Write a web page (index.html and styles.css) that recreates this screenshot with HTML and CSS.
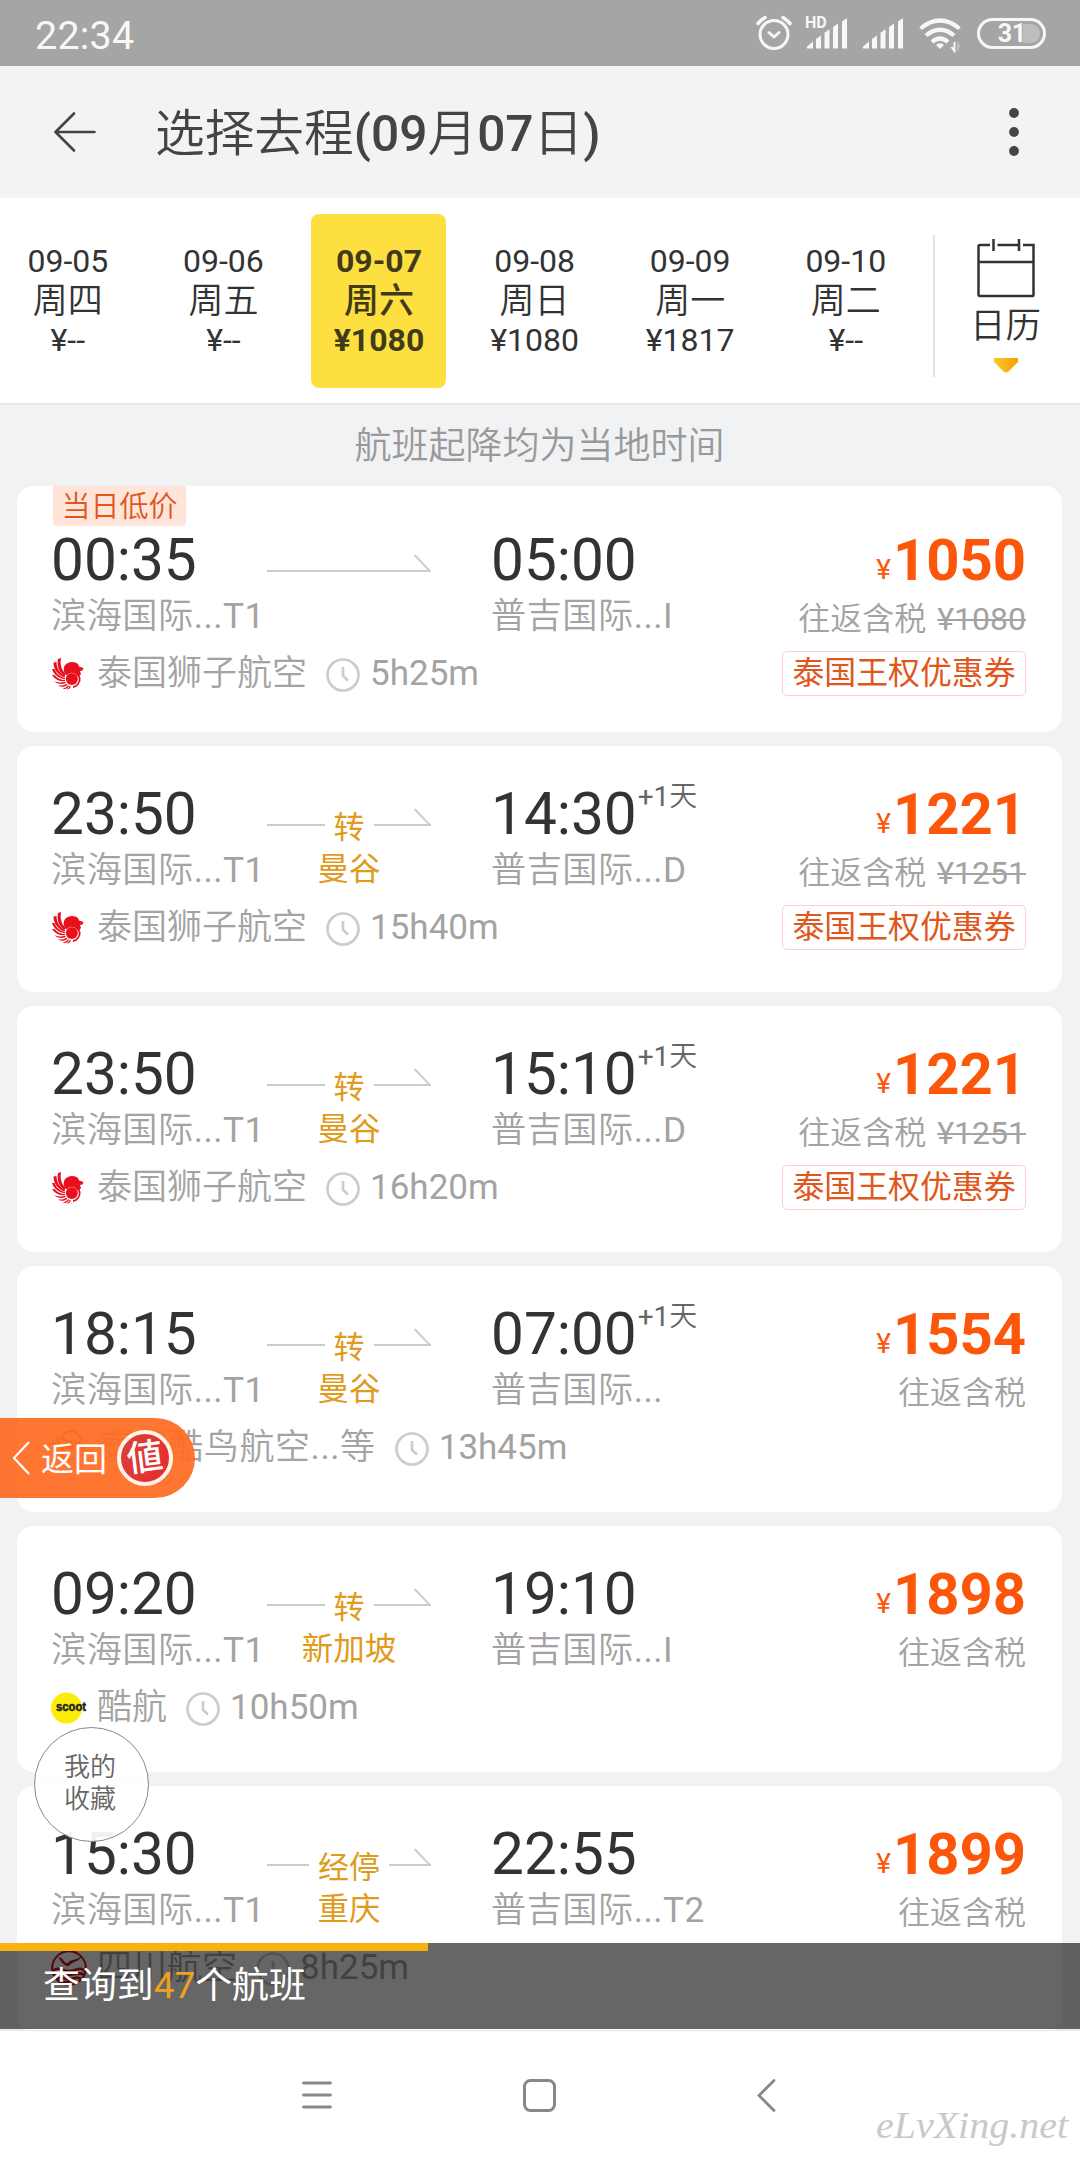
FILE: index.html
```html
<!DOCTYPE html>
<html lang="zh-CN">
<head>
<meta charset="utf-8">
<title>选择去程</title>
<link rel="stylesheet" href="styles.css">
</head>
<body>
<svg class="defs" width="0" height="0">
  <symbol id="clock" viewBox="0 0 34 34"><ellipse cx="17" cy="17" rx="15.500" ry="15.500" fill="none" stroke="#ccc" stroke-width="2.700"/><path d="M17 9v9l5 4.5" fill="none" stroke="#ccc" stroke-width="2.700"/></symbol>
  <symbol id="head" viewBox="0 0 17 18"><path d="M.8 1.2 15.5 16.6" fill="none" stroke="#ccc" stroke-width="2"/><path d="M0 17h17" stroke="#ccc" stroke-width="2"/></symbol>
  <symbol id="lion" viewBox="0 0 32 32">
    <path d="M12 14c-1-5 1-8 4-9 3-2 8-1 10 1l1 2.500 4.500 1.500-1 2.500-2.500.5 1 3-2.500 3-2-2c-3-3-7-3-10 .5z" fill="#e8101c"/>
    <circle cx="19.800" cy="21" r="6" fill="#e8101c"/>
    <path d="M24 15.500c4 2 5 7 2 10.500-1.500 2-3 3-5 3" fill="none" stroke="#e8101c" stroke-width="1.800"/>
    <g fill="#e8101c"><path d="M6 1 9 0c-1 6 0 12 5 16l-1.500 2C7 14 4.500 8 6 1z"/><path d="M1.500 4.500 4.500 4c0 6 3 11 8.500 14l-.5 1.500C5.500 17 1.500 11 1.500 4.500z"/><path d="M0 11h2.500c2 5 5 7.500 10.500 9v1.300C7 20.500 2 17 0 11z"/><path d="M0 17h2.500c3 3.500 6 5 10.500 5v1.300c-5.500.4-10-1.800-13-6.300z"/><path d="M2 23c4 1.800 7.500 1.800 11.300.8l.5 1.200C10 26.500 5.500 26.500 2 23z"/><path d="M6 27.500c3.500.3 6-.3 8.500-1.800l.8 1C13 29 9 29.500 6 27.500z"/><path d="M10.500 30.500c2.500-.3 4-1.300 5.500-3.200l1 .5c-1 2.500-3.500 4-6.500 2.700z"/><path d="M14.500 31.500c1.500-.8 2.500-2 3-3.500l1.300.3c-.3 2-2 3.500-4.300 3.200z"/></g>
  </symbol>
  <symbol id="signal" viewBox="0 0 41 31"><path d="M0 30.500v-2l6-5v7zM9 30.500V21l5-3.500v13zM17.500 30.500V14.800l5-3.500v19.200zM26 30.500V9l5-3.500v25zM35 30.500V3.500L40 0v30.500z" fill="#f7f7f7"/></symbol>
</svg>

<div class="screen">
  <div class="status">
    <span class="clock-text">22:34</span>
    <div class="status-icons">
      <svg width="36" height="36" viewBox="0 0 36 36" fill="none" stroke="#f7f7f7" stroke-width="3" stroke-linecap="round" stroke-linejoin="round"><circle cx="18" cy="19.500" r="14"/><path d="m13 17.500 5 4.500 5-4.500"/><path d="M2 8.500Q5 5 9 2.500M34 8.500Q31 5 27 2.500" stroke-width="3.500"/></svg>
      <div class="hd"><span>HD</span><svg width="41" height="31"><use href="#signal"/></svg></div>
      <svg class="sig2" width="41" height="31"><use href="#signal"/></svg>
      <svg class="wifi" width="43" height="35" viewBox="0 0 43 35" fill="none" stroke="#f7f7f7" stroke-width="4.200"><path d="M1.500 10.500Q21 -5.500 40.500 10.500"/><path d="M7 17.500Q21 6 35 17.500"/><path d="M13 24Q21 17 29 24"/><path d="M21 31l-4-4q4-3.500 8 0z" fill="#f7f7f7" stroke="none"/><path d="M35.500 24v9l-3-4" stroke-width="2"/><path d="M39 33v-7l2 3" stroke="#c0c0c0" stroke-width="1.500"/></svg>
      <div class="battery"><span>31</span></div>
    </div>
  </div>

  <div class="header">
    <svg width="42" height="40" viewBox="0 0 42 40" fill="none" stroke="#444" stroke-width="2.600" stroke-linecap="round" stroke-linejoin="round"><path d="M40.500 20H2M20 1.500 1.500 20 20 38.500"/></svg>
    <h1>选择去程<b>(09</b>月<b>07</b>日<b>)</b></h1>
    <svg class="more" width="10" height="48" viewBox="0 0 10 48" fill="#444"><circle cx="5" cy="5" r="4.900"/><circle cx="5" cy="24" r="4.900"/><circle cx="5" cy="43" r="4.900"/></svg>
  </div>

  <div class="dates">
    <div class="days">
      <div class="day"><span>09-05</span><span class="wk">周四</span><span>¥--</span></div>
      <div class="day"><span>09-06</span><span class="wk">周五</span><span>¥--</span></div>
      <div class="day on"><span>09-07</span><span class="wk">周六</span><span>¥1080</span></div>
      <div class="day"><span>09-08</span><span class="wk">周日</span><span>¥1080</span></div>
      <div class="day"><span>09-09</span><span class="wk">周一</span><span>¥1817</span></div>
      <div class="day"><span>09-10</span><span class="wk">周二</span><span>¥--</span></div>
    </div>
    <div class="calendar">
      <svg width="58" height="60" viewBox="0 0 58 60" fill="none" stroke="#333" stroke-width="2.500"><path d="M13 7H3q-1.500 0-1.500 1.500v48q0 1.500 1.500 1.500h52.500q1 0 1-1V7H46M20.500 7h21.500M1.500 24h55M16.500 1v12M42 1v12"/></svg>
      <span>日历</span>
      <svg width="24" height="15" viewBox="0 0 24 15"><defs><linearGradient id="gold"><stop offset="0" stop-color="#fdc92c"/><stop offset="1" stop-color="#f6a005"/></linearGradient></defs><path d="M0 0h24v4L14.500 13.500q-2.500 2-5 0L0 4z" fill="url(#gold)"/></svg>
    </div>
  </div>

  <div class="list">
    <p class="notice">航班起降均为当地时间</p>

    <div class="card low">
      <span class="tag">当日低价</span>
      <div class="trip">
        <span class="time">00:35</span>
        <div class="route"><i></i><svg width="17" height="18"><use href="#head"/></svg></div>
        <span class="time arrive">05:00</span>
        <span class="port"><u>滨海国际</u>...T1</span><span class="via"></span><span class="port arrive"><u>普吉国际</u>...I</span>
        <div class="airline"><svg class="logo" width="32" height="32"><use href="#lion"/></svg><span><u>泰国狮子航空</u></span><svg class="ck" width="34" height="34"><use href="#clock"/></svg><span>5h25m</span></div>
      </div>
      <div class="fare"><div class="price"><small>¥</small>1050</div><div class="tax"><u>往返含税</u> <s>¥1080</s></div><span class="coupon">泰国王权优惠券</span></div>
    </div>

    <div class="card">
      <div class="trip">
        <span class="time">23:50</span>
        <div class="route"><i></i><em>转</em><i></i><svg width="17" height="18"><use href="#head"/></svg></div>
        <span class="time arrive">14:30<sup>+1<u>天</u></sup></span>
        <span class="port"><u>滨海国际</u>...T1</span><span class="via">曼谷</span><span class="port arrive"><u>普吉国际</u>...D</span>
        <div class="airline"><svg class="logo" width="32" height="32"><use href="#lion"/></svg><span><u>泰国狮子航空</u></span><svg class="ck" width="34" height="34"><use href="#clock"/></svg><span>15h40m</span></div>
      </div>
      <div class="fare"><div class="price"><small>¥</small>1221</div><div class="tax"><u>往返含税</u> <s>¥1251</s></div><span class="coupon">泰国王权优惠券</span></div>
    </div>

    <div class="card">
      <div class="trip">
        <span class="time">23:50</span>
        <div class="route"><i></i><em>转</em><i></i><svg width="17" height="18"><use href="#head"/></svg></div>
        <span class="time arrive">15:10<sup>+1<u>天</u></sup></span>
        <span class="port"><u>滨海国际</u>...T1</span><span class="via">曼谷</span><span class="port arrive"><u>普吉国际</u>...D</span>
        <div class="airline"><svg class="logo" width="32" height="32"><use href="#lion"/></svg><span><u>泰国狮子航空</u></span><svg class="ck" width="34" height="34"><use href="#clock"/></svg><span>16h20m</span></div>
      </div>
      <div class="fare"><div class="price"><small>¥</small>1221</div><div class="tax"><u>往返含税</u> <s>¥1251</s></div><span class="coupon">泰国王权优惠券</span></div>
    </div>

    <div class="card">
      <div class="trip">
        <span class="time">18:15</span>
        <div class="route"><i></i><em>转</em><i></i><svg width="17" height="18"><use href="#head"/></svg></div>
        <span class="time arrive">07:00<sup>+1<u>天</u></sup></span>
        <span class="port"><u>滨海国际</u>...T1</span><span class="via">曼谷</span><span class="port arrive"><u>普吉国际</u>...</span>
        <div class="airline"><svg class="logo wide" width="36" height="36" viewBox="0 0 36 36" fill="none" stroke="#b87a10" stroke-width="2.500"><path d="M3 12c0 5 1 8 5 10M6 6c0 6 1 9 5 11M10 10c2-10 15-12 19-3 3 5-2 8-5 5M12 9q9 3 10 7c-4 2-8 0-12 4 1 8 8 11 14 8M30 16c5 2 5 8 1 10"/></svg><span class="shared"><u>泰国酷鸟航空</u>...<u>等</u></span><svg class="ck" width="34" height="34"><use href="#clock"/></svg><span>13h45m</span></div>
      </div>
      <div class="fare"><div class="price"><small>¥</small>1554</div><div class="tax"><u>往返含税</u></div></div>
    </div>

    <div class="card">
      <div class="trip">
        <span class="time">09:20</span>
        <div class="route"><i></i><em>转</em><i></i><svg width="17" height="18"><use href="#head"/></svg></div>
        <span class="time arrive">19:10</span>
        <span class="port"><u>滨海国际</u>...T1</span><span class="via">新加坡</span><span class="port arrive"><u>普吉国际</u>...I</span>
        <div class="airline"><svg class="logo wide" width="36" height="32" viewBox="0 0 36 32"><circle cx="15.500" cy="16" r="15.500" fill="#fdeb08"/><text class="scoot" x="5" y="19" textLength="30" lengthAdjust="spacingAndGlyphs">scoot</text></svg><span><u>酷航</u></span><svg class="ck" width="34" height="34"><use href="#clock"/></svg><span>10h50m</span></div>
      </div>
      <div class="fare"><div class="price"><small>¥</small>1898</div><div class="tax"><u>往返含税</u></div></div>
    </div>

    <div class="card">
      <div class="trip">
        <span class="time">15:30</span>
        <div class="route"><i></i><em>经停</em><i></i><svg width="17" height="18"><use href="#head"/></svg></div>
        <span class="time arrive">22:55</span>
        <span class="port"><u>滨海国际</u>...T1</span><span class="via">重庆</span><span class="port arrive"><u>普吉国际</u>...T2</span>
        <div class="airline"><svg class="logo wide" width="36" height="36" viewBox="0 0 36 36"><circle cx="18" cy="18" r="16.800" fill="none" stroke="#d2101c" stroke-width="2"/><path d="M7 7c6 1 6 7 10 6 2-4 7-2 14-7-4 7-10 5-13 10-5 1-8-5-11-9z" fill="#d2101c"/><path d="M2 21c5-5 9 0 16 0s11-5 16 0M3 25c5-4 9 0 15 0s10-4 15 0M6 29c5-3 7 0 12 0s7-3 12 0M11 33c3-2 11-2 14 0" fill="none" stroke="#d2101c" stroke-width="2.600"/></svg><span><u>四川航空</u></span><svg class="ck" width="34" height="34"><use href="#clock"/></svg><span>8h25m</span></div>
      </div>
      <div class="fare"><div class="price"><small>¥</small>1899</div><div class="tax"><u>往返含税</u></div></div>
    </div>

    <div class="back-pill">
      <svg width="18" height="34" viewBox="0 0 18 34" fill="none" stroke="#fff" stroke-width="2.200"><path d="M17 1 2 17l15 16"/></svg>
      <span>返回</span>
      <div class="seal"><span>値</span></div>
    </div>
    <div class="favorites">我的<br>收藏</div>
    <div class="result"><div class="bar"></div><p>查询到<b>47</b>个航班</p></div>
  </div>

  <div class="nav">
    <svg width="30" height="28" viewBox="0 0 30 28" stroke="#888" stroke-width="2.800" stroke-linecap="round"><path d="M1.500 2h27M1.500 14h27M1.500 26h27"/></svg>
    <svg width="33" height="33" viewBox="0 0 33 33" fill="none" stroke="#888" stroke-width="3"><rect x="1.500" y="1.500" width="30" height="30" rx="6"/></svg>
    <svg width="19" height="33" viewBox="0 0 19 33" fill="none" stroke="#888" stroke-width="2.800" stroke-linecap="round"><path d="M17 1.500 2 16.500l15 15"/></svg>
    <svg class="mark" width="204" height="60" viewBox="0 0 204 60"><text x="4" y="38" textLength="192" lengthAdjust="spacingAndGlyphs">eLvXing.net</text></svg>
  </div>
</div>
</body>
</html>
```
FILE: styles.css
```css
* { box-sizing: border-box; }
body {
  margin: 0;
  font-family: Roboto, "Noto Sans CJK SC", sans-serif;
  color: #333;
}
/* Chinese runs are set slightly lighter than the digits beside them */
u { text-decoration: none; font-weight: 350; }
.defs { position: absolute; }
.screen {
  width: 1080px;
  height: 2160px;
  display: flex;
  flex-direction: column;
  overflow: hidden;
  background: #f1f2f4;
}
svg { display: block; flex: none; }

/* status bar */
.status {
  height: 66px;
  flex: none;
  display: flex;
  justify-content: space-between;
  padding: 0 34px 0 35px;
  background: #a5a5a5;
  color: #f7f7f7;
}
.clock-text { font-size: 39.500px; line-height: 71px; letter-spacing: .2px; }
.status-icons { display: flex; align-items: flex-start; padding-top: 15px; }
.hd { position: relative; margin: 3px 0 0 15px; }
.hd span { position: absolute; left: -2px; top: -4px; font-size: 16px; font-weight: 700; line-height: 18px; }
.hd svg { width: 41px; }
.sig2 { margin: 3px 0 0 15px; }
.wifi { margin: 3px 0 0 15px; }
.battery {
  width: 69px;
  height: 31px;
  margin: 3px 0 0 15px;
  border: 3px solid #f7f7f7;
  border-radius: 16px;
  padding: 3px;
  display: flex;
}
.battery span { width: 100%; text-align: center; font-size: 25px; font-weight: 700; line-height: 20px; padding-left: 1px; border-radius: 10px; background: linear-gradient(#bdbdbd, #bdbdbd) right / 17px 19px no-repeat; }

/* title bar */
.header {
  height: 132px;
  flex: none;
  display: flex;
  align-items: center;
  padding: 0 61px 0 54px;
  background: #f3f3f3;
  color: #444;
}
.header h1 { margin: 0 0 0 59px; font-size: 49.700px; font-weight: 350; line-height: 60px; padding-top: 4px; }
.header b { font-weight: 500; }
.more { margin-left: auto; }

/* date strip */
.dates {
  height: 207px;
  flex: none;
  display: flex;
  background: #fff;
  padding-top: 16px;
  border-bottom: 2px solid #e6e7e9;
}
.days { display: flex; width: 934px; margin-left: -10px; flex: none; }
.day { width: 135px; height: 174px; margin: 0 10.300px; flex: none; display: flex; flex-direction: column; align-items: center; padding-top: 28px; font-size: 32px; line-height: 39.500px; border-radius: 8px; }
.day .wk { font-size: 35px; font-weight: 350; }
.day.on { background: #fddf3f; font-weight: 700; color: #403a1c; }
.day.on .wk { font-weight: 500; }
.calendar { height: 142px; margin: 21px 0 0 9px; width: 147px; border-left: 2px solid #e3e3e3; display: flex; flex-direction: column; align-items: center; padding: 3px 4px 0 0; }
.calendar span { font-size: 35.500px; font-weight: 350; line-height: 44px; margin-top: 6px; }
.calendar svg:last-child { margin-top: 10px; }

/* flight list */
.list { position: relative; height: 1626px; flex: none; overflow: hidden; padding: 0 18px 0 17px; display: flex; flex-direction: column; gap: 14px; border-bottom: 1px solid #e6e6e6; }
.notice { margin: 0; height: 67px; flex: none; text-align: center; color: #999; font-size: 37px; font-weight: 350; line-height: 84px; }
.card { position: relative; height: 246px; flex: none; background: #fff; border-radius: 17px; padding: 38px 36px 0 34px; display: flex; justify-content: space-between; }
.card.low { padding-top: 44px; }
.tag { position: absolute; left: 36px; top: 0; height: 40px; width: 133px; text-align: center; background: #ffe4d9; border-radius: 0 0 4px 4px; color: #e0571b; font-size: 29px; font-weight: 350; line-height: 42px; }
.trip { display: grid; grid-template-columns: 216px 164px 260px; grid-template-rows: 60px 46px 58px; white-space: nowrap; align-content: start; }
.time { font-size: 58.500px; line-height: 60px; }
.time sup { margin-left: 1px; font-size: 28px; line-height: 0; vertical-align: 28px; color: #666; }
.trip > .arrive { padding-left: 60px; }
.port { font-size: 35.200px; line-height: 40px; margin-top: 6px; color: #a3a3a3; letter-spacing: .5px; }
.route { display: flex; align-items: flex-start; height: 60px; padding-top: 24px; }
.route i { flex: 1; height: 2px; margin-top: 16px; background: #ccc; }
.route svg { margin-left: -17px; }
.route em { font-style: normal; font-size: 31px; line-height: 40px; margin: 0 9px; color: #e09a1c; }
.via { font-size: 31.500px; line-height: 40px; margin-top: 6px; text-align: center; color: #e09a1c; }
.airline { grid-column: 1 / -1; display: flex; align-items: center; height: 40px; margin-top: 18px; padding-left: 1px; font-size: 35px; line-height: 40px; color: #a3a3a3; }
.logo + span { margin-left: 13px; }
.shared { letter-spacing: .6px; }
.logo.wide { margin: 0 -3px 0 -1px; }
.ck { margin: 1px 10px 0 19px; }
.scoot { font: 700 12px "Liberation Sans", sans-serif; fill: #222; stroke: #222; stroke-width: .5px; }
.fare { display: flex; flex-direction: column; align-items: flex-end; white-space: nowrap; }
.price { font-size: 58px; font-weight: 700; line-height: 60px; color: #fb560a; }
.price small { font-size: 28px; font-weight: 400; margin-right: 2px; position: relative; top: -1px; }
.tax { margin-top: -2px; font-size: 32px; line-height: 40px; color: #a3a3a3; word-spacing: 3px; }
.tax s { text-decoration-thickness: 2px; }
.coupon { margin-top: 12px; height: 45px; width: 244px; text-align: center; border: 1.500px solid #fbd0d0; border-radius: 5px; color: #e0571b; font-size: 31.900px; line-height: 43px; }

/* floating controls */
.back-pill { position: absolute; left: 0; top: 1013px; width: 195px; height: 80px; border-radius: 0 40px 40px 0; background: rgba(255,107,34,.93); color: #fff; display: flex; align-items: center; padding-left: 12px; font-size: 33px; }
.back-pill > span { margin: -3px 0 0 11px; }
.seal { width: 56px; height: 56px; margin-left: 10px; border: 4px solid #fff4ea; border-radius: 50%; background: linear-gradient(120deg, #d84238, #ea2b2d); display: flex; align-items: center; justify-content: center; font-size: 36px; font-weight: 500; line-height: 40px; }
.seal span { transform: rotate(-7deg); }
.favorites { position: absolute; left: 34px; top: 1322px; width: 115px; height: 115px; border: 1px solid #888; border-radius: 50%; background: rgba(255,255,255,.93); color: #666; text-align: center; font-size: 26px; font-weight: 350; line-height: 32px; padding: 23px 3px 0 0; }
.result { position: absolute; left: 0; right: 0; top: 1538px; height: 86px; background: rgba(0,0,0,.6); color: #fff; }
.bar { width: 428px; height: 8px; background: #f9b110; }
.result p { margin: 10px 0 0 43px; font-size: 36.900px; line-height: 50px; }
.result b { font-weight: 400; color: #f0a020; }

/* system navigation */
.nav { position: relative; flex: 1; display: flex; align-items: flex-start; padding: 49px 0 0 302px; background: #fff; }
.nav svg:nth-child(1) { margin-top: 1px; }
.nav svg:nth-child(2) { margin: -1px 0 0 191px; }
.nav svg:nth-child(3) { margin: -1px 0 0 201px; }
.nav .mark { position: absolute; left: 872px; top: 69px; margin: 0; }
.mark text { font: italic 38px "Liberation Serif", serif; fill: #c9c9c9; }
```
